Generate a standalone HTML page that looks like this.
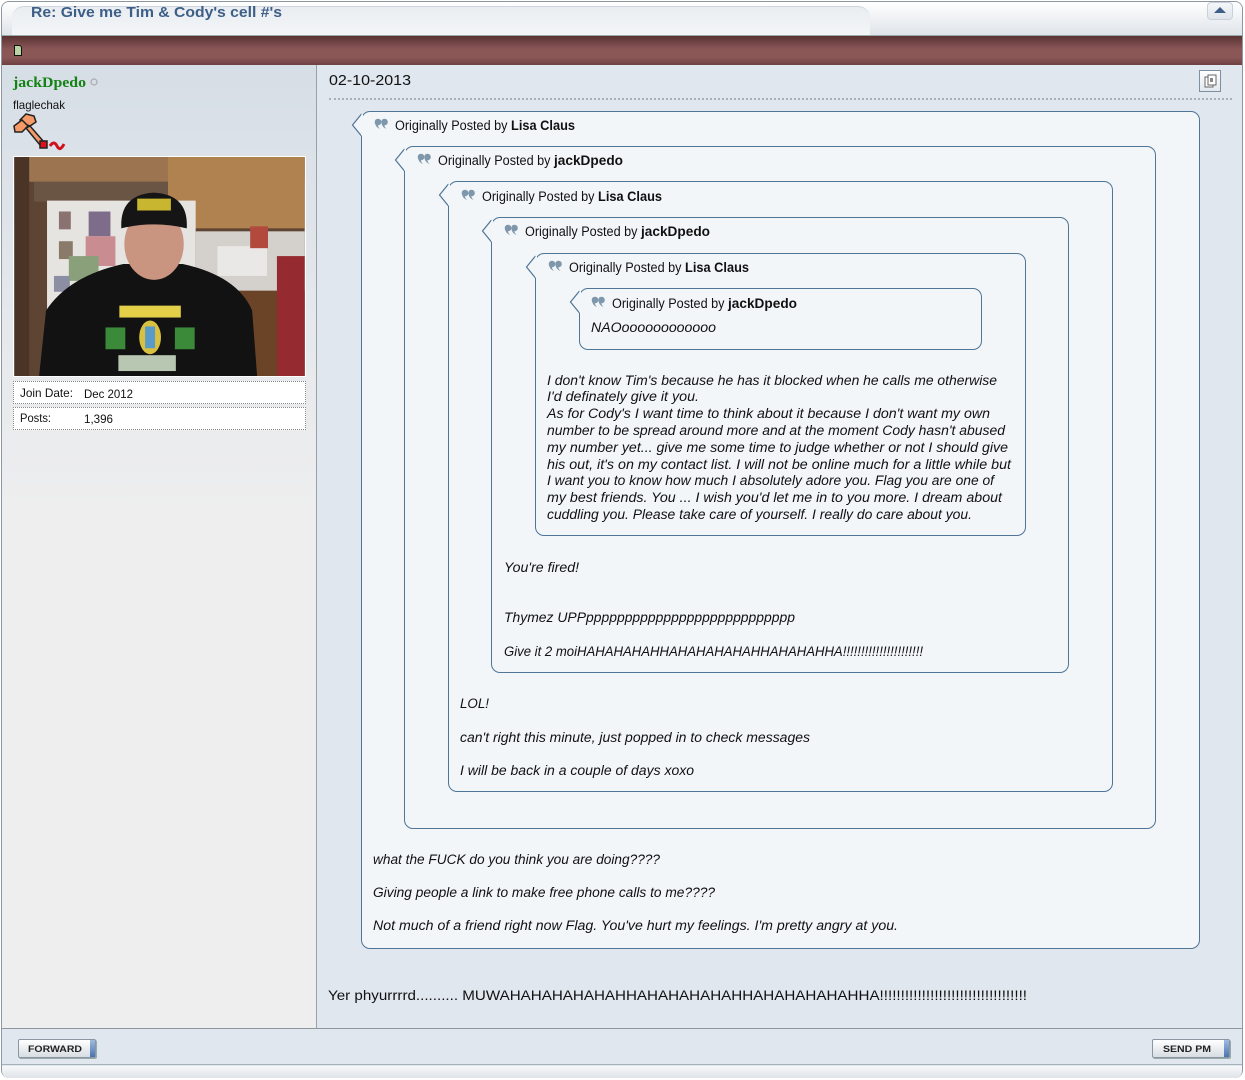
<!DOCTYPE html>
<html><head><meta charset="utf-8">
<style>
*{margin:0;padding:0;box-sizing:border-box}
body{width:1245px;height:1080px;background:#fff;position:relative;overflow:hidden;font-family:"Liberation Sans",sans-serif}
.a{position:absolute}
.q{position:absolute;border:1px solid #4f7597;border-radius:9px;background:#f2f6f9}
</style></head><body>
<div class="a" style="left:1px;top:1px;width:1242px;height:1077px;border:1px solid #8e979f;border-radius:8px;background:#e1e7ef"></div>
<div class="a" style="left:2px;top:2px;width:1240px;height:33px;border-radius:7px 7px 0 0;background:linear-gradient(#ffffff,#dfe4ea)"></div>
<div class="a" style="left:12px;top:6px;width:858px;height:30px;border-radius:12px 12px 0 0;background:linear-gradient(#e9edf1,#f4f6f8);border-top:1px solid #cfd6dd"></div>
<div class="a" style="left:1207px;top:2px;width:26px;height:18px;border-radius:4px;background:linear-gradient(#f5f7f9,#dfe5eb);border:1px solid #c9d0d8"></div>
<svg class="a" style="left:1212px;top:5px" width="16" height="10"><polygon points="2,8 8,2 14,8" fill="#3d5f87"/></svg>
<div class="a" style="left:2px;top:35px;width:1240px;height:30px;background:linear-gradient(#5a3333,#8a5656 45%,#8a5656 75%,#6e4040);border-top:1px solid #9aa"></div>
<div class="a" style="left:14px;top:45px;width:8px;height:11px;background:#b9d3a5;border:1px solid #111;border-radius:0 3px 0 0"></div>
<div class="a" style="left:2px;top:65px;width:315px;height:963px;background:linear-gradient(#d6dee6 0px,#e5e8ec 250px,#eeeeee 450px,#eeeeee);border-right:1px solid #9aa0a6"></div>
<div class="a" style="left:318px;top:65px;width:924px;height:963px;background:#e1e7ef"></div>
<div class="a" style="left:329px;top:98px;width:903px;height:0;border-top:2px dotted #a9b0b7"></div>
<div class="a" style="left:1199px;top:70px;width:22px;height:22px;border:1px solid #7d8fa1;background:linear-gradient(#fff,#e2e8ee)"></div>
<svg class="a" style="left:1202px;top:73px" width="17" height="17"><rect x="3" y="4" width="8" height="10" fill="#fff" stroke="#666"/><rect x="6" y="2" width="8" height="10" fill="#fff" stroke="#666"/><rect x="8" y="5" width="3" height="4" fill="#888"/></svg>
<div class="a" style="left:2px;top:1028px;width:1240px;height:37px;background:#e1e7ef;border-top:1px solid #8e979f;border-bottom:1px solid #a8b0b8"></div>
<div class="a" style="left:2px;top:1066px;width:1240px;height:12px;border-radius:0 0 7px 7px;background:linear-gradient(#f7f8fa,#dfe3e8)"></div>
<div class="a" style="left:18px;top:1039px;width:78px;height:19px;border:1px solid #8b96a2;border-radius:2px;background:linear-gradient(#ffffff,#d7dde3);box-shadow:1px 1px 0 #9aa"></div>
<div class="a" style="left:90px;top:1040px;width:5px;height:17px;background:linear-gradient(#9fbbe0,#4a74b0)"></div>
<div class="a" style="left:1152px;top:1039px;width:78px;height:19px;border:1px solid #8b96a2;border-radius:2px;background:linear-gradient(#ffffff,#d7dde3);box-shadow:1px 1px 0 #9aa"></div>
<div class="a" style="left:1224px;top:1040px;width:5px;height:17px;background:linear-gradient(#9fbbe0,#4a74b0)"></div>

<div class="a" style="left:13px;top:381px;width:293px;height:23px;border:1px dotted #888;background:#fff"></div>
<div class="a" style="left:13px;top:407px;width:293px;height:23px;border:1px dotted #888;background:#fff"></div>

<svg class="a" style="left:12px;top:112px" width="58" height="40">
<g stroke="#222" stroke-width="1.5">
<path d="M8,8 L14,2 L22,4 L24,10 L18,14 L12,12Z" fill="#f59a67"/>
<path d="M2,14 L10,8 L16,14 L10,20 L3,20Z" fill="#f59a67"/>
<path d="M14,16 L18,14 L32,30 L28,33Z" fill="#f59a67"/>
<rect x="28" y="29" width="7" height="7" fill="#e0101a"/>
</g>
<path d="M38,34 q4,-6 7,0 q3,6 7,-2" stroke="#d0101a" stroke-width="3" fill="none"/>
</svg>

<svg class="a" style="left:13px;top:156px;border:1px solid #fff" width="293" height="221" viewBox="0 0 293 221">
<rect width="293" height="221" fill="#5e4433"/>
<rect x="0" y="0" width="293" height="25" fill="#9c7550"/>
<rect x="155" y="0" width="138" height="72" fill="#b08250"/>
<rect x="20" y="25" width="135" height="20" fill="#6a5444"/>
<rect x="0" y="0" width="15" height="221" fill="#4a3426"/>
<rect x="33" y="44" width="150" height="128" fill="#e6e4e1"/>
<rect x="45" y="55" width="12" height="18" fill="#8a7270"/><rect x="75" y="55" width="22" height="25" fill="#7d6c8a"/><rect x="45" y="85" width="14" height="18" fill="#8a7a6a"/><rect x="72" y="80" width="30" height="30" fill="#c98c90"/><rect x="55" y="100" width="30" height="25" fill="#8aa07a"/><rect x="40" y="120" width="16" height="16" fill="#8c8fa4"/>
<rect x="183" y="75" width="110" height="60" fill="#d4d1cc"/>
<rect x="205" y="90" width="50" height="30" fill="#eae8e6"/>
<rect x="238" y="70" width="18" height="22" fill="#b2493d"/>
<rect x="210" y="135" width="83" height="86" fill="#6b4428"/>
<rect x="265" y="100" width="28" height="121" fill="#952a30"/>
<path d="M25,221 L32,155 Q55,120 110,108 L170,108 Q225,120 240,155 L245,221Z" fill="#121212"/>
<ellipse cx="141" cy="88" rx="30" ry="36" fill="#c99581"/>
<path d="M108,72 Q106,38 141,36 Q176,38 174,72 Q141,64 108,72Z" fill="#151515"/>
<rect x="124" y="42" width="34" height="12" fill="#c8b530"/>
<rect x="106" y="150" width="62" height="12" fill="#e4cf48"/>
<ellipse cx="137" cy="182" rx="11" ry="17" fill="#d8c040"/>
<rect x="132" y="171" width="10" height="22" fill="#5a9ac8"/>
<rect x="92" y="172" width="20" height="22" fill="#3a8a3a"/><rect x="162" y="172" width="20" height="22" fill="#3a8a3a"/>
<rect x="105" y="200" width="58" height="16" fill="#b7c7b2"/>
</svg>

<div class="q" style="left:361px;top:111px;width:839px;height:838px"></div>
<div class="q" style="left:404px;top:146px;width:752px;height:683px"></div>
<div class="q" style="left:448px;top:181px;width:665px;height:611px"></div>
<div class="q" style="left:491px;top:217px;width:578px;height:456px"></div>
<div class="q" style="left:535px;top:253px;width:491px;height:283px"></div>
<div class="q" style="left:579px;top:288px;width:403px;height:62px"></div>

<svg class="a" style="left:0;top:0" width="1245" height="1080">
<defs>
<g id="arr"><path d="M10.5,3 L1.5,14 L10.5,25" fill="#f2f6f9" stroke="#4f7597" stroke-width="1.2"/><rect x="10" y="3.6" width="2" height="20.8" fill="#f2f6f9"/></g>
<g id="qi" fill="#7f97ab"><circle cx="4" cy="4" r="3.3"/><path d="M1,4 Q1,9 6,11 Q3,8 4,5Z"/><circle cx="10.5" cy="4" r="3.3"/><path d="M7.5,4 Q7.5,9 12.5,11 Q9.5,8 10.5,5Z"/></g>
</defs>
<use href="#arr" x="351" y="111"/>
<use href="#arr" x="394" y="146"/>
<use href="#arr" x="438" y="181"/>
<use href="#arr" x="481" y="217"/>
<use href="#arr" x="525" y="253"/>
<use href="#arr" x="569" y="288"/>
<use href="#qi" x="374" y="118"/>
<use href="#qi" x="417" y="153"/>
<use href="#qi" x="461" y="189"/>
<use href="#qi" x="504" y="224"/>
<use href="#qi" x="548" y="260"/>
<use href="#qi" x="591" y="296"/>

<g font-family="Liberation Sans, sans-serif">
<text x="31" y="17" font-size="15" font-weight="bold" fill="#3d5f87" textLength="251" lengthAdjust="spacingAndGlyphs">Re: Give me Tim &amp; Cody's cell #'s</text>
<text x="13" y="87" font-size="15" font-weight="bold" fill="#148214" font-family="Liberation Serif, serif" textLength="73" lengthAdjust="spacingAndGlyphs">jackDpedo</text>
<circle cx="94" cy="82" r="3" fill="none" stroke="#aaa" stroke-width="1.2"/>
<text x="13" y="109" font-size="12" fill="#111" textLength="52" lengthAdjust="spacingAndGlyphs">flaglechak</text>
<text x="20" y="397" font-size="12" fill="#111" textLength="53" lengthAdjust="spacingAndGlyphs">Join Date:</text>
<text x="84" y="398" font-size="12" fill="#111" textLength="49" lengthAdjust="spacingAndGlyphs">Dec 2012</text>
<text x="20" y="422" font-size="12" fill="#111" textLength="31" lengthAdjust="spacingAndGlyphs">Posts:</text>
<text x="84" y="423" font-size="12" fill="#111" textLength="29" lengthAdjust="spacingAndGlyphs">1,396</text>
<text x="329" y="85" font-size="15" fill="#111" textLength="82" lengthAdjust="spacingAndGlyphs">02-10-2013</text>

<g font-size="13.5" fill="#111">
<text x="395" y="130"><tspan textLength="116" lengthAdjust="spacingAndGlyphs">Originally Posted by </tspan><tspan font-weight="bold" textLength="64" lengthAdjust="spacingAndGlyphs">Lisa Claus</tspan></text>
<text x="438" y="165"><tspan textLength="116" lengthAdjust="spacingAndGlyphs">Originally Posted by </tspan><tspan font-weight="bold" textLength="69" lengthAdjust="spacingAndGlyphs">jackDpedo</tspan></text>
<text x="482" y="201"><tspan textLength="116" lengthAdjust="spacingAndGlyphs">Originally Posted by </tspan><tspan font-weight="bold" textLength="64" lengthAdjust="spacingAndGlyphs">Lisa Claus</tspan></text>
<text x="525" y="236"><tspan textLength="116" lengthAdjust="spacingAndGlyphs">Originally Posted by </tspan><tspan font-weight="bold" textLength="69" lengthAdjust="spacingAndGlyphs">jackDpedo</tspan></text>
<text x="569" y="272"><tspan textLength="116" lengthAdjust="spacingAndGlyphs">Originally Posted by </tspan><tspan font-weight="bold" textLength="64" lengthAdjust="spacingAndGlyphs">Lisa Claus</tspan></text>
<text x="612" y="308"><tspan textLength="116" lengthAdjust="spacingAndGlyphs">Originally Posted by </tspan><tspan font-weight="bold" textLength="69" lengthAdjust="spacingAndGlyphs">jackDpedo</tspan></text>
</g>

<g font-size="13.5" font-style="italic" fill="#111">
<text x="591" y="332" textLength="125" lengthAdjust="spacingAndGlyphs">NAOoooooooooooo</text>
<text x="547" y="385" textLength="450" lengthAdjust="spacingAndGlyphs">I don't know Tim's because he has it blocked when he calls me otherwise</text>
<text x="547" y="401" textLength="152" lengthAdjust="spacingAndGlyphs">I'd definately give it you.</text>
<text x="547" y="418" textLength="443" lengthAdjust="spacingAndGlyphs">As for Cody's I want time to think about it because I don't want my own</text>
<text x="547" y="435" textLength="458" lengthAdjust="spacingAndGlyphs">number to be spread around more and at the moment Cody hasn't abused</text>
<text x="547" y="452" textLength="461" lengthAdjust="spacingAndGlyphs">my number yet... give me some time to judge whether or not I should give</text>
<text x="547" y="469" textLength="464" lengthAdjust="spacingAndGlyphs">his out, it's on my contact list. I will not be online much for a little while but</text>
<text x="547" y="485" textLength="447" lengthAdjust="spacingAndGlyphs">I want you to know how much I absolutely adore you. Flag you are one of</text>
<text x="547" y="502" textLength="455" lengthAdjust="spacingAndGlyphs">my best friends. You ... I wish you'd let me in to you more. I dream about</text>
<text x="547" y="519" textLength="425" lengthAdjust="spacingAndGlyphs">cuddling you. Please take care of yourself. I really do care about you.</text>
<text x="504" y="572" textLength="75" lengthAdjust="spacingAndGlyphs">You're fired!</text>
<text x="504" y="622" textLength="291" lengthAdjust="spacingAndGlyphs">Thymez UPPppppppppppppppppppppppppppp</text>
<text x="504" y="656" textLength="419" lengthAdjust="spacingAndGlyphs">Give it 2 moiHAHAHAHAHHAHAHAHAHAHHAHAHAHHA!!!!!!!!!!!!!!!!!!!!!!</text>
<text x="460" y="708" textLength="29" lengthAdjust="spacingAndGlyphs">LOL!</text>
<text x="460" y="742" textLength="350" lengthAdjust="spacingAndGlyphs">can't right this minute, just popped in to check messages</text>
<text x="460" y="775" textLength="234" lengthAdjust="spacingAndGlyphs">I will be back in a couple of days xoxo</text>
<text x="373" y="864" textLength="287" lengthAdjust="spacingAndGlyphs">what the FUCK do you think you are doing????</text>
<text x="373" y="897" textLength="342" lengthAdjust="spacingAndGlyphs">Giving people a link to make free phone calls to me????</text>
<text x="373" y="930" textLength="525" lengthAdjust="spacingAndGlyphs">Not much of a friend right now Flag. You've hurt my feelings. I'm pretty angry at you.</text>
</g>
<text x="328" y="1000" font-size="14" fill="#111" textLength="699" lengthAdjust="spacingAndGlyphs">Yer phyurrrrd.......... MUWAHAHAHAHAHAHHAHAHAHAHAHHAHAHAHAHAHHA!!!!!!!!!!!!!!!!!!!!!!!!!!!!!!!!!!!</text>
<text x="28" y="1052" font-size="9" font-weight="bold" fill="#222" textLength="54" lengthAdjust="spacingAndGlyphs">FORWARD</text>
<text x="1163" y="1052" font-size="9" font-weight="bold" fill="#222" textLength="48" lengthAdjust="spacingAndGlyphs">SEND PM</text>
</g>
</svg>
</body></html>
